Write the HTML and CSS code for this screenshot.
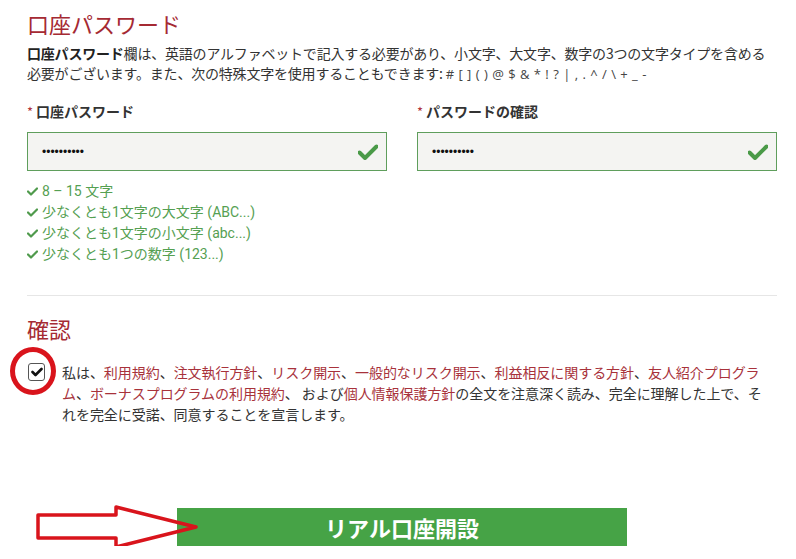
FILE: index.html
```html
<!DOCTYPE html>
<html lang="ja">
<head>
<meta charset="utf-8">
<link rel="stylesheet" href="styles.css">
</head>
<body>
<div class="page">
  <h1 class="title">口座パスワード</h1>
  <p class="desc"><b>口座パスワード</b>欄は、英語のアルファベットで記入する必要があり、小文字、大文字、数字の3つの文字タイプを含める必要がございます。また、次の特殊文字を使用することもできます: <span class="sym"># [ ] ( ) @ $ &amp; * ! ? &#124; , . ^ / \ + _ -</span></p>

  <div class="fields">
    <div class="field">
      <div class="label"><span class="req">*</span>口座パスワード</div>
      <div class="input"><span class="dots">••••••••••</span>
        <svg class="ok" width="20" height="16" viewBox="0 0 20 16"><path d="M1.5 8.5 L7 14 L18.5 2.5" fill="none" stroke="#4a9a48" stroke-width="4" stroke-linejoin="round" stroke-linecap="round"/></svg>
      </div>
    </div>
    <div class="field">
      <div class="label"><span class="req">*</span>パスワードの確認</div>
      <div class="input"><span class="dots">••••••••••</span>
        <svg class="ok" width="20" height="16" viewBox="0 0 20 16"><path d="M1.5 8.5 L7 14 L18.5 2.5" fill="none" stroke="#4a9a48" stroke-width="4" stroke-linejoin="round" stroke-linecap="round"/></svg>
      </div>
    </div>
  </div>

  <ul class="rules">
    <li><svg class="tick" width="11" height="9" viewBox="0 0 11 9"><path d="M1 4.5 L4 7.5 L10 1.5" fill="none" stroke="#4f9a4c" stroke-width="2.2" stroke-linecap="round" stroke-linejoin="round"/></svg>8 – 15 文字</li>
    <li><svg class="tick" width="11" height="9" viewBox="0 0 11 9"><path d="M1 4.5 L4 7.5 L10 1.5" fill="none" stroke="#4f9a4c" stroke-width="2.2" stroke-linecap="round" stroke-linejoin="round"/></svg>少なくとも1文字の大文字 (ABC...)</li>
    <li><svg class="tick" width="11" height="9" viewBox="0 0 11 9"><path d="M1 4.5 L4 7.5 L10 1.5" fill="none" stroke="#4f9a4c" stroke-width="2.2" stroke-linecap="round" stroke-linejoin="round"/></svg>少なくとも1文字の小文字 (abc...)</li>
    <li><svg class="tick" width="11" height="9" viewBox="0 0 11 9"><path d="M1 4.5 L4 7.5 L10 1.5" fill="none" stroke="#4f9a4c" stroke-width="2.2" stroke-linecap="round" stroke-linejoin="round"/></svg>少なくとも1つの数字 (123...)</li>
  </ul>

  <div class="divider"></div>

  <h2 class="title">確認</h2>
  <div class="agree">
    <div class="cbwrap">
      <span class="checkbox"><svg width="12" height="10" viewBox="0 0 12 10"><path d="M1.5 5 L4.5 8 L10.5 2" fill="none" stroke="#111" stroke-width="2.6" stroke-linecap="round" stroke-linejoin="round"/></svg></span>
      <span class="circle"></span>
    </div>
    <p class="agree-text">私は、<a>利用規約</a>、<a>注文執行方針</a>、<a>リスク開示</a>、<a>一般的なリスク開示</a>、<a>利益相反に関する方針</a>、<a>友人紹介プログラム</a>、<a>ボーナスプログラムの利用規約</a>、 および<a>個人情報保護方針</a>の全文を注意深く読み、完全に理解した上で、それを完全に受諾、同意することを宣言します。</p>
  </div>

  <div class="submit-row">
    <svg class="arrow" width="170" height="48" viewBox="0 0 170 48"><path d="M2 10 H80 V2 L160 22 L80 42 V33 H2 Z" fill="none" stroke="#d9141c" stroke-width="3.5" stroke-linejoin="round"/></svg>
    <button class="submit">リアル口座開設</button>
  </div>
</div>
</body>
</html>
```
FILE: styles.css
```css
* { box-sizing: border-box; }
body {
  margin: 0;
  background: #fff;
  color: #333;
  font-family: "Open Sans", "Noto Sans CJK JP", sans-serif;
}
.page {
  width: 777px;
  padding: 8px 0 0 27px;
}
.title {
  margin: 0;
  font-size: 22px;
  line-height: 30px;
  font-weight: 400;
  color: #a52a33;
  font-family: "Noto Sans CJK JP", sans-serif;
}
.desc {
  margin: 5px 0 0;
  font-size: 14px;
  line-height: 20px;
  letter-spacing: -0.2px;
  font-family: "Noto Sans CJK JP", sans-serif;
  color: #333;
}
.desc b { font-weight: 700; color: #222; }
.sym { font-family: "Open Sans", sans-serif; font-size: 13px; letter-spacing: 0.5px; color: #444; }
.fields {
  margin-top: 17px;
  display: grid;
  grid-template-columns: 360px 360px;
  column-gap: 30px;
}
.label {
  font-family: "Noto Sans CJK JP", sans-serif;
  font-weight: 700;
  font-size: 14px;
  line-height: 20px;
  color: #333;
  margin-bottom: 10px;
}
.req { color: #b0343d; font-weight: 400; margin-right: 3px; font-size: 13px; }
.input {
  height: 39px;
  border: 1px solid #5f9e5c;
  background: #f4f4f2;
  display: flex;
  align-items: center;
  justify-content: space-between;
  padding: 0 8px 0 14px;
}
.dots {
  font-family: "Liberation Sans", sans-serif;
  font-size: 12px;
  color: #111;
  letter-spacing: 0;
}
.ok { display: block; }
.rules {
  list-style: none;
  margin: 10px 0 0;
  padding: 0;
  font-size: 14px;
  line-height: 21px;
  color: #55a052;
  font-family: "Roboto", "Noto Sans CJK JP", sans-serif;
}
.rules li { display: flex; align-items: center; height: 21px; }
.tick { margin-right: 4px; flex: none; }
.divider {
  margin-top: 30px;
  height: 1px;
  width: 750px;
  background: #e6e6e6;
}
h2.title { margin-top: 17px; }
.agree {
  margin-top: 19px;
  display: flex;
  align-items: flex-start;
}
.cbwrap {
  position: relative;
  width: 35px;
  flex: none;
  padding-top: 1px;
  padding-left: 1px;
}
.checkbox {
  width: 17px;
  height: 18px;
  border: 1px solid #555;
  border-radius: 3px;
  background: #fff;
  display: flex;
  align-items: center;
  justify-content: center;
}
.circle {
  position: absolute;
  left: -17px;
  top: -15px;
  width: 46px;
  height: 48px;
  border: 5px solid #d9141c;
  border-radius: 50%;
}
.agree-text {
  margin: 0;
  width: 712px;
  font-size: 14px;
  line-height: 21px;
  font-family: "Noto Sans CJK JP", sans-serif;
  color: #333;
  letter-spacing: -0.05px;
}
.agree-text a { color: #a8323b; }
.submit-row {
  margin-top: 83px;
  position: relative;
  padding-left: 150px;
}
.arrow {
  position: absolute;
  left: 9px;
  top: -3px;
}
.submit {
  display: block;
  width: 450px;
  height: 38px;
  border: 0;
  background: #46a346;
  color: #fff;
  font-family: "Noto Sans CJK JP", sans-serif;
  font-weight: 700;
  font-size: 22px;
  line-height: 38px;
  padding: 0;
}
```
